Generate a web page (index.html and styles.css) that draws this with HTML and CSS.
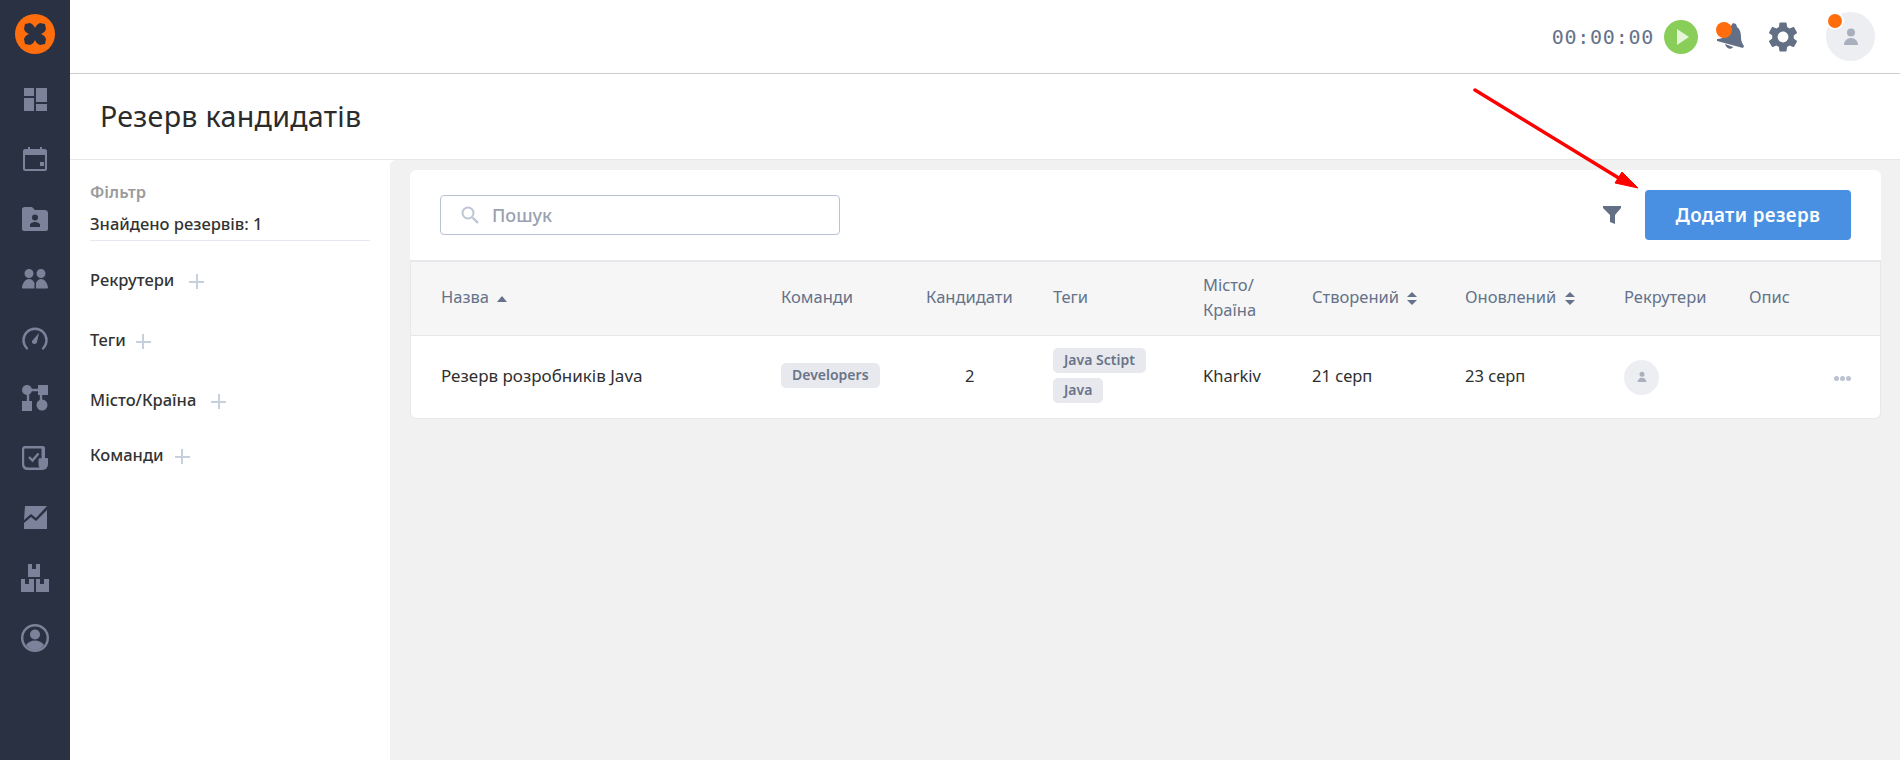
FILE: index.html
```html
<!DOCTYPE html>
<html lang="uk">
<head>
<meta charset="utf-8">
<title>Резерв кандидатів</title>
<link rel="stylesheet" href="styles.css">
</head>
<body>
<div class="app">
  <nav class="sidebar">
    <div class="logo">
      <svg width="40" height="40" viewBox="0 0 40 40"><circle cx="20" cy="20" r="20" fill="#ff6d0d"/><path d="M10 10L15 9C18 10 19 12 20 14C21 12 22 10 25 9L30 10L31 15C30 18 28 19 26 20C28 21 30 22 31 25L30 30L25 31C22 30 21 28 20 26C19 28 18 30 15 31L10 30L9 25C10 22 12 21 14 20C12 19 10 18 9 15Z" fill="#2a3142"/></svg>
    </div>
    <a class="nav-item"><svg width="24" height="24" viewBox="0 0 24 24"><path class="fi" d="M1 1h10v8H1zM1 11h10v13H1zM13 1h11v14H13zM13 17h11v7H13z"/></svg></a>
    <a class="nav-item"><svg width="26" height="26" viewBox="0 0 26 26"><path class="fi" fill-rule="evenodd" d="M6 1h2v2h10V1h2v2h3c1 0 2 1 2 2v18c0 1-1 2-2 2H3c-1 0-2-1-2-2V5c0-1 1-2 2-2h3zM3 9v14h20V9zM18 16h4v4h-4z"/></svg></a>
    <a class="nav-item"><svg width="26" height="24" viewBox="0 0 26 24"><path class="fi" fill-rule="evenodd" d="M3 0h7l3 3h10c1.500 0 3 1 3 3v16c0 1-1 2-2 2H2c-1 0-2-1-2-2V2c0-1 1-2 3-2zM13 7.500a3 3 0 1 0 0 6 3 3 0 0 0 0-6zM8 20h10v-2c0-2-3-3-5-3s-5 1-5 3z"/></svg></a>
    <a class="nav-item"><svg width="26" height="20" viewBox="0 0 26 20"><path class="fi" d="M7 0a4.500 4.500 0 1 1 0 9 4.500 4.500 0 0 1 0-9zM19 0a4.500 4.500 0 1 1 0 9 4.500 4.500 0 0 1 0-9zM0 19c0-4 3-9 7-9 3 0 4.500 2 5.500 4v5.500H1zM14 19.500V14c1-2 2.500-4 5-4 4 0 7 5 7 9l-1 .5z"/></svg></a>
    <a class="nav-item"><svg width="26" height="26" viewBox="0 0 26 26"><path class="st" d="M5 22.500a11.500 11.500 0 1 1 16 0" stroke-linecap="round"/><path class="fi" d="M17 7l-2 9a2.500 2.500 0 0 1-5-1z"/></svg></a>
    <a class="nav-item"><svg width="26" height="26" viewBox="0 0 26 26"><path class="st" d="M5 5h16M19 7l0 14M6 7v10"/><circle class="fi" cx="5" cy="5" r="5"/><path class="fi" d="M16 0h10v10H16zM0 16h10v10H0z"/><circle class="fi" cx="20" cy="20" r="5.500"/></svg></a>
    <a class="nav-item"><svg width="26" height="24" viewBox="0 0 26 24"><path class="fi" fill-rule="evenodd" d="M3 0h18c1 0 2 1 2 2v10h2c.6 0 1 .4 1 1v5c0 3-2 6-6 6H6c-4 0-6-2-6-6V3c0-2 1-3 3-3zM3 2.500c-.5 0-.8.300-.8.800V18c0 2 1.500 3.500 3.800 3.500h11.500c-.8-1-1-2-1-3v-5c0-.8.500-1.300 1.300-1.300h1.700V3c0-.3-.2-.5-.5-.5z"/><path class="st" d="M7 11l3.500 3.500 6-7"/></svg></a>
    <a class="nav-item"><svg width="24" height="24" viewBox="0 0 24 24"><path class="fi" d="M2 0h22L13 12 8 8 1 14zM1 17l7-6 5 4L24 4v19H1z"/></svg></a>
    <a class="nav-item"><svg width="28" height="28" viewBox="0 0 28 28"><path class="fi" d="M7 0h4v5h4V0h4v13H7zM0 15h4v5h4v-5h5v13H0zM15 15h4v5h4v-5h5v13H15z"/></svg></a>
    <a class="nav-item"><svg width="28" height="28" viewBox="0 0 28 28"><circle class="st" cx="14" cy="14" r="12.800"/><circle class="fi" cx="14" cy="10.500" r="5"/><path class="fi" d="M5 21c2-3 5.500-4.500 9-4.500s7 1.500 9 4.500c-2 3-5.500 5-9 5s-7-2-9-5z"/></svg></a>
  </nav>

  <div class="body-col">
    <header class="topbar">
      <span class="timer">00:00:00</span>
      <span class="play"><svg width="14" height="16" viewBox="0 0 14 16"><path d="M1 0l12 8-12 8z" fill="#e6f5d8"/></svg></span>
      <span class="bell">
        <svg width="27" height="27" viewBox="0 0 27 27"><path d="M16 0l3 1 1 3c3 2 4 6 4 10 0 4 1 6 3 9l-1 2L0 18v-2c4 0 6-1 7-3zM8 21l8 3c-1 3-7 2-8-3z" fill="#636f85"/></svg>
        <i class="dot"></i>
      </span>
      <span class="gear">
        <svg width="36" height="36" viewBox="0 0 24 24"><path d="M19.140 12.940c.04-.3.060-.61.060-.94 0-.32-.02-.64-.07-.94l2.030-1.580c.18-.14.230-.41.120-.61l-1.920-3.320c-.12-.22-.37-.29-.59-.22l-2.390.96c-.5-.38-1.030-.7-1.620-.94l-.36-2.540c-.04-.24-.24-.41-.48-.41h-3.840c-.24 0-.43.170-.47.410l-.36 2.540c-.59.240-1.130.57-1.620.94l-2.390-.96c-.22-.08-.47 0-.59.220L2.740 8.870c-.12.210-.08.470.12.610l2.030 1.580c-.05.3-.09.630-.09.940s.02.640.07.940l-2.030 1.580c-.18.140-.23.410-.12.610l1.920 3.320c.12.220.37.290.59.220l2.390-.96c.5.380 1.030.7 1.620.94l.36 2.540c.05.240.24.410.48.410h3.840c.24 0 .44-.17.470-.41l.36-2.540c.59-.24 1.130-.56 1.620-.94l2.390.96c.22.080.47 0 .59-.22l1.920-3.320c.12-.22.070-.47-.12-.61l-2.010-1.580zM12 15.600c-1.980 0-3.600-1.620-3.600-3.600s1.620-3.600 3.600-3.600 3.600 1.620 3.600 3.600-1.620 3.600-3.600 3.600z" fill="#636f85"/></svg>
      </span>
      <span class="avatar avatar-lg">
        <svg width="16" height="18" viewBox="0 0 16 18"><circle cx="8" cy="4.500" r="4" fill="#a9afbd"/><path d="M1 17c0-4 3-7 7-7s7 3 7 7z" fill="#a9afbd"/></svg>
        <i class="dot dot-avatar"></i>
      </span>
    </header>

    <div class="title-bar"><h1>Резерв кандидатів</h1></div>

    <div class="content">
      <aside class="filters">
        <div class="filter-label">Фільтр</div>
        <div class="filter-count">Знайдено резервів: 1</div>
        <div class="filter-row f-rec">Рекрутери <i class="plus"></i></div>
        <div class="filter-row f-tag">Теги <i class="plus"></i></div>
        <div class="filter-row f-city">Місто/Країна <i class="plus"></i></div>
        <div class="filter-row f-team">Команди <i class="plus"></i></div>
      </aside>

      <main class="main">
        <section class="toolbar">
          <label class="search">
            <svg width="20" height="20" viewBox="0 0 20 20"><circle cx="8" cy="8" r="5.500" fill="none" stroke="#bcc5d6" stroke-width="2"/><path d="M12.500 12.500l5.500 5.500" stroke="#bcc5d6" stroke-width="2.400"/></svg>
            <span>Пошук</span>
          </label>
          <span class="filter-btn"><svg width="18" height="20" viewBox="0 0 18 20"><path d="M0 1h18v2l-6 7v9l-5-2v-7L0 3z" fill="#636f85"/></svg></span>
          <button class="add-btn">Додати резерв</button>
        </section>

        <table class="grid">
          <colgroup>
            <col class="c1"><col class="c2"><col class="c3"><col class="c4"><col class="c5"><col class="c6"><col class="c7"><col class="c8"><col class="c9">
          </colgroup>
          <thead>
            <tr>
              <th class="first">Назва <i class="sort-up"></i></th>
              <th>Команди</th>
              <th>Кандидати</th>
              <th>Теги</th>
              <th>Місто/<br>Країна</th>
              <th>Створений <i class="sort"></i></th>
              <th>Оновлений <i class="sort"></i></th>
              <th>Рекрутери</th>
              <th>Опис</th>
            </tr>
          </thead>
          <tbody>
            <tr>
              <td class="first name">Резерв розробників Java</td>
              <td><span class="tag">Developers</span></td>
              <td class="num">2</td>
              <td><span class="tag">Java Sctipt</span><span class="tag">Java</span></td>
              <td>Kharkiv</td>
              <td>21 серп</td>
              <td>23 серп</td>
              <td><span class="avatar avatar-sm"><svg width="10" height="12" viewBox="0 0 16 18"><circle cx="8" cy="4.500" r="4" fill="#a9afbd"/><path d="M1 17c0-4 3-7 7-7s7 3 7 7z" fill="#a9afbd"/></svg></span></td>
              <td class="more"><i></i><i></i><i></i></td>
            </tr>
          </tbody>
        </table>
      </main>
    </div>
  </div>
</div>

<svg class="arrow" width="180" height="110" viewBox="0 0 180 110">
  <path d="M3 3L150 93" stroke="#f00" stroke-width="3.500" stroke-linecap="round"/>
  <path d="M166 101L143 96L150 85z" fill="#f00" stroke="#f00" stroke-linejoin="round"/>
</svg>
</body>
</html>
```

FILE: styles.css
```css
* { box-sizing: border-box; }
html, body { margin: 0; height: 100%; }
body {
  font-family: "Noto Sans", "Open Sans", sans-serif;
  color: #2f2f2f;
  background: #f1f1f1;
  overflow: hidden;
  position: relative;
}
.app { display: flex; height: 760px; }

.sidebar {
  width: 70px;
  flex: none;
  background: #2a3142;
  padding-top: 14px;
  display: flex;
  flex-direction: column;
  align-items: center;
}
.logo { height: 40px; margin-bottom: 15px; }
.logo svg { display: block; }
.nav-item {
  height: 59.900px;
  display: flex;
  align-items: center;
  justify-content: center;
}
.fi { fill: #7c8299; }
.st { fill: none; stroke: #7c8299; stroke-width: 2.400; }

.body-col { flex: 1; display: flex; flex-direction: column; min-width: 0; }

.topbar {
  height: 74px;
  flex: none;
  background: #fff;
  border-bottom: 1px solid #cdcdcd;
  display: flex;
  align-items: center;
  justify-content: flex-end;
  padding-right: 25px;
}
.timer {
  font-family: "DejaVu Sans Mono", monospace;
  font-size: 20px;
  letter-spacing: .75px;
  color: #65728a;
  margin-right: 10px;
}
.play {
  width: 34px;
  height: 34px;
  border-radius: 50%;
  background: #8ace5a;
  display: flex;
  align-items: center;
  justify-content: center;
  padding-left: 3px;
  margin-right: 19px;
}
.bell { position: relative; width: 27px; height: 27px; margin-right: 21px; }
.bell svg, .gear svg { display: block; }
.dot {
  position: absolute;
  left: -1px;
  top: -1px;
  width: 16px;
  height: 16px;
  border-radius: 50%;
  background: #ff6d0d;
}
.gear { width: 36px; height: 36px; margin-right: 25px; }
.avatar {
  position: relative;
  border-radius: 50%;
  background: #eceef2;
  display: inline-flex;
  align-items: center;
  justify-content: center;
}
.avatar-lg { width: 49px; height: 49px; }
.avatar-sm { width: 35px; height: 35px; vertical-align: middle; margin-top: 4px; }
.dot-avatar {
  left: 0;
  top: 0;
  width: 18px;
  height: 18px;
  border: 2px solid #fff;
  box-sizing: border-box;
}

.title-bar {
  height: 86px;
  flex: none;
  background: #fff;
  border-bottom: 1px solid #e6e6e6;
  padding: 0 0 2px 30px;
  display: flex;
  align-items: center;
}
h1 {
  margin: 0;
  font-size: 28.600px;
  font-weight: 400;
  letter-spacing: .3px;
  color: #2b2b2b;
}

.content { flex: 1; display: flex; min-height: 0; background: #fff; }
.filters {
  width: 320px;
  flex: none;
  background: #fff;
  padding: 21px 20px 0;
}
.filter-label { font-size: 16.500px; font-weight: 600; color: #9b9b9b; line-height: 22px; }
.filter-count {
  margin-top: 10px;
  font-size: 16.500px;
  font-weight: 500;
  color: #333;
  line-height: 22px;
  padding-bottom: 5px;
  border-bottom: 1px solid #e6e8ef;
}
.filter-row {
  font-size: 16.500px;
  font-weight: 500;
  color: #333;
  line-height: 22px;
  display: flex;
  align-items: center;
}
.f-rec { margin-top: 28px; }
.f-tag { margin-top: 38px; }
.f-city { margin-top: 38px; }
.f-team { margin-top: 33px; }
.plus {
  display: inline-block;
  width: 15px;
  height: 15px;
  margin: 3px 0 0 12px;
  background:
    linear-gradient(#c6cfde, #c6cfde) center / 15px 2px no-repeat,
    linear-gradient(#c6cfde, #c6cfde) center / 2px 15px no-repeat;
}
.f-rec .plus, .f-city .plus { margin-left: 15px; }
.f-tag .plus { margin-left: 10px; }
.f-team .plus { margin-left: 11px; }

.main {
  flex: 1;
  min-width: 0;
  background: #f1f1f1;
  border-top-left-radius: 6px;
  padding: 10px 19px 0 20px;
}
.toolbar {
  height: 92px;
  background: #fff;
  border-radius: 6px 6px 0 0;
  display: flex;
  align-items: center;
  padding: 0 30px;
  border-bottom: 2px solid #e8e8ec;
}
.search {
  width: 400px;
  height: 40px;
  border: 1px solid #b8c2d4;
  border-radius: 4px;
  display: flex;
  align-items: center;
  padding-left: 19px;
  gap: 12px;
  font-size: 18px;
  font-weight: 500;
  color: #9aa1b0;
  background: #fff;
}
.filter-btn { margin-left: auto; margin-right: 24px; height: 20px; }
.filter-btn svg { display: block; }
.add-btn {
  width: 206px;
  height: 50px;
  border: 0;
  border-radius: 4px;
  background: #4a90e2;
  color: #fff;
  font-family: inherit;
  font-size: 18.800px;
  font-weight: 600;
  letter-spacing: .4px;
}

.grid {
  width: 100%;
  table-layout: fixed;
  border-collapse: separate;
  border-spacing: 0;
  background: #fff;
  border: 1px solid #e8e8e8;
  border-top: 0;
  border-radius: 0 0 6px 6px;
  font-size: 16.500px;
}
.c1 { width: 370px; }
.c2 { width: 145px; }
.c3 { width: 127px; }
.c4 { width: 150px; }
.c5 { width: 109px; }
.c6 { width: 153px; }
.c7 { width: 159px; }
.c8 { width: 125px; }
th {
  height: 74px;
  background: #f6f6f6;
  border-bottom: 1px solid #e6e6e6;
  padding: 0 0 4px;
  text-align: left;
  font-weight: 400;
  color: #64728a;
  line-height: 25px;
}
td { height: 82px; padding: 0 0 4px; color: #2f2f2f; }
.name { font-size: 17px; }
.first { padding-left: 30px; }
.num { padding-left: 39px; }
.sort-up, .sort { display: inline-block; vertical-align: middle; margin-left: 4px; position: relative; }
.sort-up {
  width: 0;
  height: 0;
  border: 5.500px solid transparent;
  border-top: 0;
  border-bottom: 6px solid #64728a;
}
.sort { width: 11px; height: 13px; }
.sort::before, .sort::after {
  content: "";
  position: absolute;
  left: 0;
  border: 5.500px solid transparent;
}
.sort::before { top: 0; border-top: 0; border-bottom: 5.500px solid #64728a; }
.sort::after { bottom: 0; border-bottom: 0; border-top: 5.500px solid #64728a; }
.tag {
  display: table;
  height: 25px;
  line-height: 24px;
  padding: 0 11px;
  background: #e7e9ee;
  border-radius: 5px;
  font-size: 14px;
  font-weight: 600;
  color: #6a7488;
}
.tag + .tag { margin-top: 5px; }
.more { text-align: right; padding: 0 29px 2px 0; white-space: nowrap; }
.more i {
  display: inline-block;
  width: 5px;
  height: 5px;
  margin-left: 1px;
  border-radius: 50%;
  background: #bcc2d0;
  vertical-align: middle;
}

.arrow { position: absolute; left: 1472px; top: 87px; }
```
